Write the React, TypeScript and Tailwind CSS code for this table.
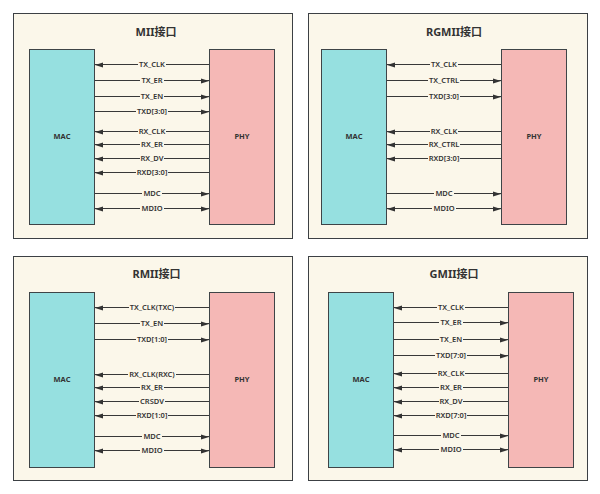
import React from 'react';

type Dir = 'left' | 'right' | 'both';

interface Signal {
  name: string;
  dir: Dir;
  mt: string;
}

interface Iface {
  title: string;
  bodyPad: string;
  titlePad: string;
  signals: Signal[];
}

const FONT = { fontFamily: '"Noto Sans", "Noto Sans CJK SC", sans-serif' };

const PANELS: Iface[] = [
  {
    title: 'MII接口',
    bodyPad: 'pl-[15px]',
    titlePad: 'pl-[6px] pt-[2px]',
    signals: [
      { name: 'TX_CLK', dir: 'left', mt: 'mt-[9px]' },
      { name: 'TX_ER', dir: 'right', mt: 'mt-[3px]' },
      { name: 'TX_EN', dir: 'right', mt: 'mt-[3px]' },
      { name: 'TXD[3:0]', dir: 'right', mt: 'mt-[2px]' },
      { name: 'RX_CLK', dir: 'left', mt: 'mt-[7px]' },
      { name: 'RX_ER', dir: 'left', mt: 'mt-0' },
      { name: 'RX_DV', dir: 'left', mt: 'mt-[1px]' },
      { name: 'RXD[3:0]', dir: 'left', mt: 'mt-[1px]' },
      { name: 'MDC', dir: 'right', mt: 'mt-[8px]' },
      { name: 'MDIO', dir: 'both', mt: 'mt-[2px]' },
    ],
  },
  {
    title: 'RGMII接口',
    bodyPad: 'pl-[12px]',
    titlePad: 'pl-[12px] pt-[2px]',
    signals: [
      { name: 'TX_CLK', dir: 'left', mt: 'mt-[9px]' },
      { name: 'TX_CTRL', dir: 'right', mt: 'mt-[3px]' },
      { name: 'TXD[3:0]', dir: 'right', mt: 'mt-[3px]' },
      { name: 'RX_CLK', dir: 'left', mt: 'mt-[22px]' },
      { name: 'RX_CTRL', dir: 'left', mt: 'mt-0' },
      { name: 'RXD[3:0]', dir: 'left', mt: 'mt-[1px]' },
      { name: 'MDC', dir: 'right', mt: 'mt-[22px]' },
      { name: 'MDIO', dir: 'both', mt: 'mt-[2px]' },
    ],
  },
  {
    title: 'RMII接口',
    bodyPad: 'pl-[15px]',
    titlePad: 'pl-[7px]',
    signals: [
      { name: 'TX_CLK(TXC)', dir: 'left', mt: 'mt-[9px]' },
      { name: 'TX_EN', dir: 'right', mt: 'mt-[3px]' },
      { name: 'TXD[1:0]', dir: 'right', mt: 'mt-[3px]' },
      { name: 'RX_CLK(RXC)', dir: 'left', mt: 'mt-[22px]' },
      { name: 'RX_ER', dir: 'left', mt: 'mt-0' },
      { name: 'CRSDV', dir: 'left', mt: 'mt-[1px]' },
      { name: 'RXD[1:0]', dir: 'left', mt: 'mt-[1px]' },
      { name: 'MDC', dir: 'right', mt: 'mt-[8px]' },
      { name: 'MDIO', dir: 'both', mt: 'mt-[1px]' },
    ],
  },
  {
    title: 'GMII接口',
    bodyPad: 'pl-[19px]',
    titlePad: 'pl-[12px]',
    signals: [
      { name: 'TX_CLK', dir: 'left', mt: 'mt-[9px]' },
      { name: 'TX_ER', dir: 'right', mt: 'mt-[2px]' },
      { name: 'TX_EN', dir: 'right', mt: 'mt-[4px]' },
      { name: 'TXD[7:0]', dir: 'right', mt: 'mt-[3px]' },
      { name: 'RX_CLK', dir: 'left', mt: 'mt-[5px]' },
      { name: 'RX_ER', dir: 'left', mt: 'mt-px' },
      { name: 'RX_DV', dir: 'left', mt: 'mt-px' },
      { name: 'RXD[7:0]', dir: 'left', mt: 'mt-[1px]' },
      { name: 'MDC', dir: 'right', mt: 'mt-[7px]' },
      { name: 'MDIO', dir: 'both', mt: 'mt-[1px]' },
    ],
  },
];

function Arrow({ side }: { side: 'left' | 'right' }) {
  return (
    <svg
      width="8"
      height="6"
      viewBox="0 0 8 6"
      className={`absolute top-1/2 -translate-y-1/2 ${side === 'left' ? 'left-0' : 'right-0'}`}
    >
      {side === 'left' ? (
        <path d="M0 3L8 0.5V5.5Z" fill="#333" />
      ) : (
        <path d="M8 3L0 0.5V5.5Z" fill="#333" />
      )}
    </svg>
  );
}

function SignalRow({ signal }: { signal: Signal }) {
  return (
    <div className={`relative flex h-[13px] items-center ${signal.mt}`}>
      <div className="h-px flex-1 bg-[#383838]" />
      <span className="px-[1px] text-[7.5px] font-semibold leading-none text-[#333] whitespace-nowrap">
        {signal.name}
      </span>
      <div className="h-px flex-1 bg-[#383838]" />
      {(signal.dir === 'left' || signal.dir === 'both') && <Arrow side="left" />}
      {(signal.dir === 'right' || signal.dir === 'both') && <Arrow side="right" />}
    </div>
  );
}

function Block({ label, color }: { label: string; color: string }) {
  return (
    <div
      className={`flex h-[176px] w-[66px] items-center justify-center border border-[#3e4447] ${color}`}
    >
      <span className="text-[7.5px] font-bold text-[#333]">{label}</span>
    </div>
  );
}

function Panel({ iface }: { iface: Iface }) {
  return (
    <div className="flex flex-col border border-[#3c4044] bg-[#fbf7ea]">
      <div
        className={`flex h-[35px] items-center justify-center text-[11px] font-bold text-[#333] ${iface.titlePad}`}
      >
        {iface.title}
      </div>
      <div className={`flex items-start ${iface.bodyPad}`}>
        <Block label="MAC" color="bg-[#96e0e0]" />
        <div className="flex w-[114px] flex-col">
          {iface.signals.map((s) => (
            <SignalRow key={s.name} signal={s} />
          ))}
        </div>
        <Block label="PHY" color="bg-[#f5b8b6]" />
      </div>
    </div>
  );
}

export default function App() {
  return (
    <div
      className="grid h-[494px] w-[600px] grid-cols-[280px_280px] grid-rows-[226px_225px] gap-x-[15px] gap-y-[17px] bg-white pl-[13px] pt-[13px]"
      style={FONT}
    >
      {PANELS.map((p) => (
        <Panel key={p.title} iface={p} />
      ))}
    </div>
  );
}
